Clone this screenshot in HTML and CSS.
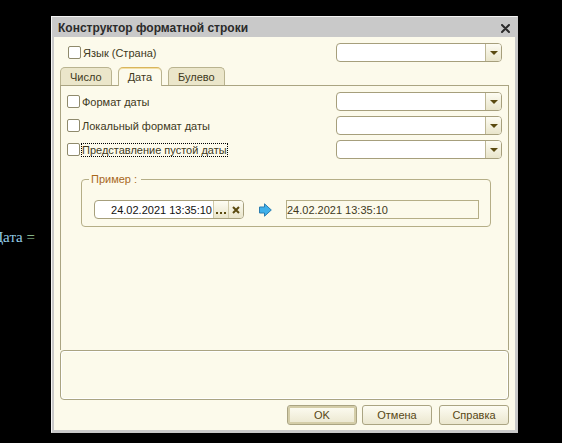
FILE: index.html
```html
<!DOCTYPE html>
<html lang="ru">

<head>
    <meta charset="utf-8">
    <title>Конструктор форматной строки</title>
    <link rel="stylesheet" href="styles.css">
</head>

<body>
    <div class="editor"><code>Дата <span class="op">=</span></code></div>

    <form class="dialog">
        <div class="titlebar">
            <h1>Конструктор форматной строки</h1>
            <button type="button" class="close" aria-label="Закрыть">
                <svg width="9" height="9" viewBox="0 0 9 9"><path d="M1 1L8 8M8 1L1 8" stroke="#2b2b2b" stroke-width="2" stroke-linecap="round"/></svg>
            </button>
        </div>

        <div class="content">
            <div class="row language">
                <input type="checkbox" id="lang">
                <label for="lang">Язык (Страна)</label>
                <span class="combo"><select aria-label="Язык (Страна)"></select></span>
            </div>

            <div class="tabs" role="tablist">
                <button type="button" role="tab" class="tab">Число</button>
                <button type="button" role="tab" class="tab active" aria-selected="true">Дата</button>
                <button type="button" role="tab" class="tab">Булево</button>
            </div>

            <div class="pane" role="tabpanel">
                <div class="row">
                    <input type="checkbox" id="format">
                    <label for="format">Формат даты</label>
                    <span class="combo"><select aria-label="Формат даты"></select></span>
                </div>
                <div class="row">
                    <input type="checkbox" id="local">
                    <label for="local">Локальный формат даты</label>
                    <span class="combo"><select aria-label="Локальный формат даты"></select></span>
                </div>
                <div class="row">
                    <input type="checkbox" id="empty">
                    <label for="empty" class="focused">Представление пустой даты</label>
                    <span class="combo"><select aria-label="Представление пустой даты"></select></span>
                </div>

                <fieldset class="sample">
                    <legend>Пример :</legend>
                    <div class="sample-row">
                        <div class="date-field">
                            <input type="text" value="24.02.2021 13:35:10" aria-label="Дата">
                            <button type="button" aria-label="Выбрать">
                                <svg width="10" height="9" viewBox="0 0 10 9"><path d="M0 7h2v2H0zM4 7h2v2H4zM8 7h2v2H8z" fill="#5a4a10"/></svg>
                            </button>
                            <button type="button" aria-label="Очистить">
                                <svg width="8" height="8" viewBox="0 0 8 8"><path d="M1 1L7 7M7 1L1 7" stroke="#5a4a10" stroke-width="2"/></svg>
                            </button>
                        </div>
                        <svg class="arrow" width="13" height="14" viewBox="0 0 13 14"><path d="M.5 4h5V.8L12.3 7l-6.8 6.2V10h-5z" fill="#3fb0ea" stroke="#2b7db0"/></svg>
                        <input type="text" class="result" value="24.02.2021 13:35:10" aria-label="Результат" readonly>
                    </div>
                </fieldset>
            </div>

            <div class="message"></div>

            <div class="buttons">
                <button type="submit" class="btn default">OK</button>
                <button type="button" class="btn">Отмена</button>
                <button type="button" class="btn help">Справка</button>
            </div>
        </div>
    </form>
</body>
</html>
```

FILE: styles.css
```css
* {
    box-sizing: border-box;
    margin: 0;
    padding: 0;
}

body {
    background: #000;
    color: #40391c;
    font: 11px/14px "Liberation Sans", Arial, sans-serif;
}

input,
select,
button {
    font: inherit;
    color: inherit;
}

svg {
    display: block;
    fill: none;
}

/* code behind the dialog */
.editor {
    display: flex;
    justify-content: flex-end;
    width: 35px;
    padding-top: 228px;
    overflow: hidden;
}

.editor code {
    font: 15px/18px "Liberation Serif", serif;
    color: #93cbe8;
    white-space: nowrap;
}

.editor .op {
    color: #9fd6a0;
}

.dialog {
    position: absolute;
    top: 16px;
    left: 51px;
    right: 44px;
    border: 1px solid #f4f4f4;
    border-right-color: #c8c8c8;
    border-bottom-color: #c8c8c8;
    background: #c9c9c9;
    padding: 0 2px 2px;
}

.titlebar {
    display: flex;
    align-items: center;
    justify-content: space-between;
    height: 20px;
    padding: 2px 5px 0 4px;
}

.titlebar h1 {
    font-size: 12px;
    color: #2b2b2b;
}

.close {
    border: 0;
    background: none;
}

.content {
    background: #fcfaeb;
    padding: 6px 6px 5px;
}

.row {
    display: flex;
    align-items: center;
    gap: 1px;
    height: 19px;
    margin-bottom: 5px;
}

.row.language {
    padding: 0 7px 0 8px;
}

.row label {
    padding: 0 1px;
}

.row .focused {
    outline: 1px dotted #000;
    outline-offset: -1px;
}

input[type="checkbox"] {
    appearance: none;
    width: 13px;
    height: 13px;
    border: 1px solid #8f8a6c;
    border-radius: 2px;
    background: #fff;
}

input[type="checkbox"]:checked {
    background: #5a4a10;
}

.combo {
    display: flex;
    position: relative;
    width: 166px;
    height: 19px;
    margin-left: auto;
    border: 1px solid #a69f7c;
    border-radius: 4px;
    background: #fff;
    overflow: hidden;
}

.combo select {
    appearance: none;
    width: 100%;
    border: 0;
    background: none;
}

.combo::before {
    content: "";
    position: absolute;
    top: 0;
    right: 0;
    width: 15px;
    height: 100%;
    border-left: 1px solid #bdb796;
    background: linear-gradient(#fdfcf2, #e9e5cb);
    pointer-events: none;
}

.combo::after {
    content: "";
    position: absolute;
    top: 7px;
    right: 3px;
    border: 4px solid transparent;
    border-top-color: #5a4a10;
    border-bottom: 0;
    pointer-events: none;
}

.tabs {
    display: flex;
    gap: 6px;
}

.tab {
    height: 18px;
    padding: 0 9px;
    border: 1px solid #b9b38f;
    border-bottom: 0;
    border-radius: 5px 5px 0 0;
    background: #ebe6ca;
}

.tab.active {
    height: 19px;
    margin-bottom: -1px;
    border-top-color: #d9b65c;
    background: #fcfaeb;
    box-shadow: inset 0 1px #f3dfa5;
    z-index: 1;
}

.pane {
    min-height: 265px;
    padding: 6px;
    border: 1px solid #aaa482;
    border-bottom: 0;
}

.sample {
    margin: 13px 11px 0 14px;
    padding: 0 11px 7px 12px;
    border: 1px solid #b5ae87;
    border-radius: 4px;
}

.sample legend {
    padding: 0 4px 0 2px;
    margin-left: -5px;
    color: #a8681c;
}

.sample-row {
    display: flex;
    align-items: center;
    margin-top: 14px;
}

.date-field {
    display: flex;
    width: 150px;
    height: 19px;
    border: 1px solid #a69f7c;
    border-radius: 4px;
    background: #fff;
    overflow: hidden;
}

.date-field input {
    flex: 1;
    min-width: 0;
    padding-right: 1px;
    border: 0;
    background: none;
    color: #111;
    text-align: right;
}

.date-field button {
    display: flex;
    align-items: center;
    justify-content: center;
    width: 15px;
    border: 0;
    border-left: 1px solid #cfc9a8;
    background: linear-gradient(#fdfcf2, #e9e5cb);
}

.arrow {
    margin: 0 14px 0 15px;
}

.result {
    flex: 1;
    min-width: 0;
    height: 19px;
    border: 1px solid #b5ae87;
    background: none;
}

.message {
    height: 50px;
    border: 1px solid #aaa482;
    border-radius: 4px;
    box-shadow: inset 0 0 0 1px #fff;
}

.buttons {
    display: flex;
    justify-content: flex-end;
    gap: 5px;
    margin-top: 5px;
}

.btn {
    width: 70px;
    height: 20px;
    border: 1px solid #aaa482;
    border-radius: 3px;
    background: linear-gradient(#fdfcf2, #ebe7cf);
    color: #574715;
}

.btn.default {
    box-shadow: inset 0 0 0 2px #d4cda8;
}

.btn.help {
    margin-left: 2px;
}
```
